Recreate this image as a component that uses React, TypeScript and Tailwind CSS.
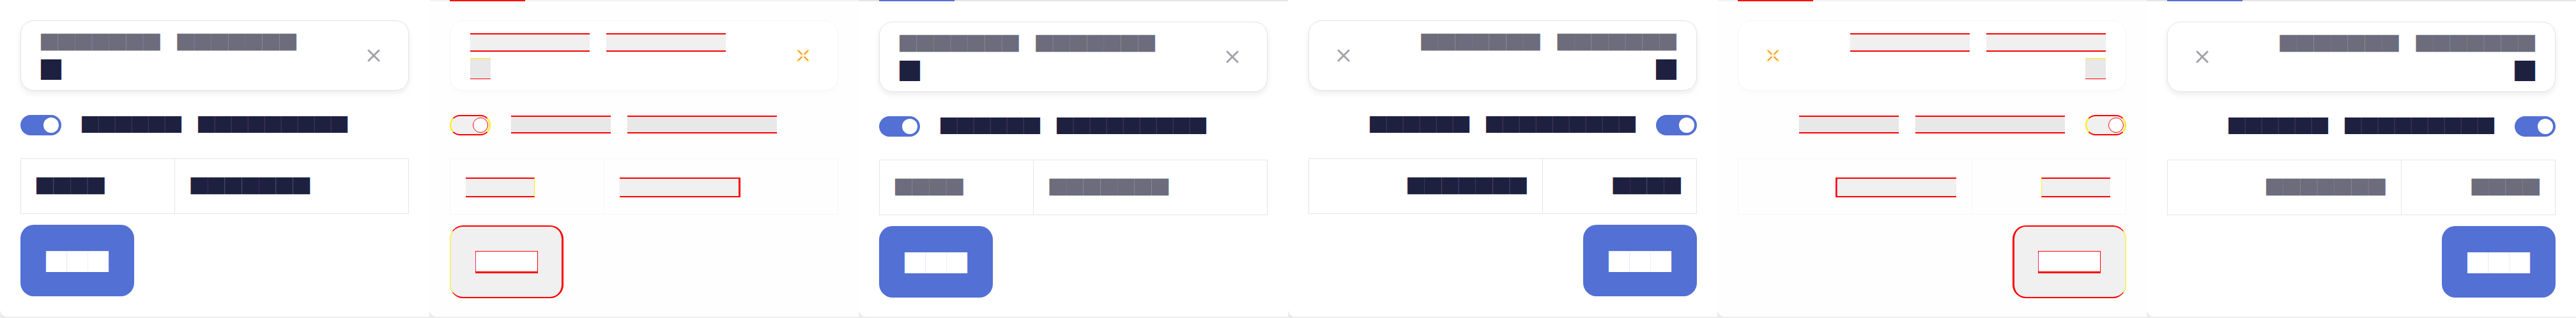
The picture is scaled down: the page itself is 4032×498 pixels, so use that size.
import React from "react";
import { clsx } from "clsx";

type Mode = "plain" | "tab" | "diff";

// text in the shot is drawn in a block font: every glyph is a full square
const B = "█";
const SP = "\u3000";
const word = (n: number) => B.repeat(n);

function XIcon({ diff }: { diff: boolean }) {
  return (
    <svg width="20" height="20" viewBox="0 0 20 20" className="shrink-0">
      {diff ? (
        <g fill="none" strokeLinecap="round">
          <path d="M2 2L18 18M18 2L2 18" stroke="#ffdd00" strokeWidth="3.4" />
          <path d="M2 2L18 18M18 2L2 18" stroke="#ffffff" strokeWidth="2" />
          <path d="M2.5 2.5L8 8M12 12L17.5 17.5M17.5 2.5L12 8M8 12L2.5 17.5" stroke="#ff0000" strokeWidth="1" />
        </g>
      ) : (
        <path d="M2 2L18 18M18 2L2 18" stroke="#a1a1ab" strokeWidth="3" strokeLinecap="round" fill="none" />
      )}
    </svg>
  );
}

function TopStrip({ diff }: { diff: boolean }) {
  return (
    <div dir="ltr" className={clsx("flex h-[2px]", diff ? "bg-[#f3f3f3]" : "bg-[#e5e5e5]")}>
      <div className={clsx("ml-[32px] w-[118px]", diff ? "bg-[#ff0000]" : "bg-[#5370d4]")} />
    </div>
  );
}

function Panel({ dir, mode }: { dir: "ltr" | "rtl"; mode: Mode }) {
  const diff = mode === "diff";
  const cellText = mode === "tab" ? "text-[#6c6c7c]" : "text-[#1e2040]";

  return (
    <div className="h-[498px] w-[672px] shrink-0 bg-[#ececec]">
      <div
        dir={dir}
        className={clsx(
          "h-[496px] overflow-hidden rounded-bl-[12px] font-['Noto_Sans_CJK_SC',sans-serif]",
          diff ? "bg-[#fefefe]" : "bg-white",
        )}
      >
        {mode !== "plain" && <TopStrip diff={diff} />}
        <div className={clsx("px-[32px]", diff ? "pt-[30px]" : "pt-[32px]")}>
          {/* card */}
          <div
            className={clsx(
              "flex items-center rounded-[21px] border bg-white pb-[18px] pe-[44px] ps-[31px] pt-[19px]",
              diff
                ? "border-[#f6f6f6] shadow-[0_4px_10px_rgba(0,0,0,0.02)]"
                : "border-[#e4e4e4] shadow-[0_4px_10px_rgba(0,0,0,0.08)]",
            )}
          >
            <div className="flex-1">
              <div dir="ltr" className={clsx("h-[26.67px] text-[26.67px] leading-[26.67px] text-[#6c6c7c]", dir === "rtl" && "text-right")}>
                {diff ? (
                  <>
                    <span className="inline-block h-[28.67px] border-y-2 border-[#ff0000] bg-[#f0f0f0] align-top text-[22px] leading-[24.67px] tracking-[4.67px] text-[#f0f0f0]">{word(7)}</span>
                    {SP}
                    <span className="inline-block h-[28.67px] border-y-2 border-[#ff0000] bg-[#f0f0f0] align-top text-[22px] leading-[24.67px] tracking-[4.67px] text-[#f0f0f0]">{word(7)}</span>
                  </>
                ) : (
                  <>{word(7)}{SP}{word(7)}</>
                )}
              </div>
              <div className="mt-[12.33px] h-[32px] text-[32px] leading-[32px] text-[#1e2040]">
                {diff ? (
                  <span className="inline-block h-[32.67px] border-y border-b-[#ff0000] border-t-[#ffee00] bg-[#e8e8e8] align-top text-[28px] leading-[30.67px] tracking-[4px] text-[#e8e8e8]">{B}</span>
                ) : (
                  B
                )}
              </div>
            </div>
            <XIcon diff={diff} />
          </div>

          {/* switch row */}
          <div className="mt-[38px] flex items-start gap-[32px]">
            <div
              dir="ltr"
              className={clsx(
                "flex h-[32px] w-[64px] shrink-0 items-center justify-end rounded-full",
                diff ? "border-2 border-x-[#ffee00] border-y-[#ff0000] bg-[#f0f0f0] p-[2px]" : "bg-[#5370d4] p-[4px]",
              )}
            >
              <div className={clsx("size-[24px] rounded-full bg-white", diff && "border border-[#ff0000]")} />
            </div>
            <div dir="ltr" className="mt-[1px] h-[26px] text-[26px] leading-[26px] text-[#1e2040]">
              {diff ? (
                <>
                  <span className="inline-block h-[27.67px] border-y-2 border-[#ff0000] bg-[#e8e8e8] align-top text-[21px] leading-[23.67px] tracking-[5px] text-[#e8e8e8]">{word(6)}</span>
                  {SP}
                  <span className="inline-block h-[27.67px] border-y-2 border-[#ff0000] bg-[#e8e8e8] align-top text-[21px] leading-[23.67px] tracking-[5px] text-[#e8e8e8]">{word(9)}</span>
                </>
              ) : (
                <>{word(6)}{SP}{word(9)}</>
              )}
            </div>
          </div>

          {/* table */}
          <table className="mt-[36px] w-full border-collapse">
            <tbody>
              <tr>
                <td
                  className={clsx(
                    "border pb-[26px] pe-[24px] ps-[24px] pt-[23px] text-start align-top text-[26.67px] leading-[36px]",
                    diff ? "border-[#f7f7f7]" : clsx("border-[#e5e5e5]", cellText),
                  )}
                >
                  {diff ? (
                    <span className="inline-block h-[30.67px] border-y-2 border-e border-[#ff0000] border-e-[#ffee00] bg-[#f0f0f0] align-middle text-[24px] leading-[26.67px] tracking-[2.67px] text-[#f0f0f0]">{word(4)}</span>
                  ) : (
                    word(4)
                  )}
                </td>
                <td
                  className={clsx(
                    "border pb-[26px] pe-[24px] ps-[24px] pt-[23px] text-start align-top text-[26.67px] leading-[36px]",
                    diff ? "border-[#f7f7f7]" : clsx("border-[#e5e5e5]", cellText),
                  )}
                >
                  {diff ? (
                    <span className="inline-block h-[30.67px] border-y-2 border-e-[3px] border-[#ff0000] bg-[#f0f0f0] align-middle text-[24px] leading-[26.67px] tracking-[2.67px] text-[#f0f0f0]">{word(7)}</span>
                  ) : (
                    word(7)
                  )}
                </td>
              </tr>
            </tbody>
          </table>

          {/* button */}
          <div className="mt-[17px] flex">
            <button
              type="button"
              className={clsx(
                "rounded-[21px] text-[32.67px] leading-[32px] text-white",
                diff
                  ? "border-y-2 border-e-[3px] border-s border-y-[#ff0000] border-e-[#ff0000] border-s-[#ffee00] bg-[#f0f0f0] pb-[37px] pe-[37px] ps-[39px] pt-[38px]"
                  : "bg-[#5370d4] px-[40px] py-[40px]",
              )}
            >
              {diff ? (
                <span className="block h-[35px] border border-b-[3px] border-[#ff0000] bg-white text-[28px] leading-[31px] tracking-[4px] text-white">{word(3)}</span>
              ) : (
                word(3)
              )}
            </button>
          </div>
        </div>
      </div>
    </div>
  );
}

export default function App() {
  return (
    <div className="flex h-[498px] w-[4032px] bg-white">
      <Panel dir="ltr" mode="plain" />
      <Panel dir="ltr" mode="diff" />
      <Panel dir="ltr" mode="tab" />
      <Panel dir="rtl" mode="plain" />
      <Panel dir="rtl" mode="diff" />
      <Panel dir="rtl" mode="tab" />
    </div>
  );
}
